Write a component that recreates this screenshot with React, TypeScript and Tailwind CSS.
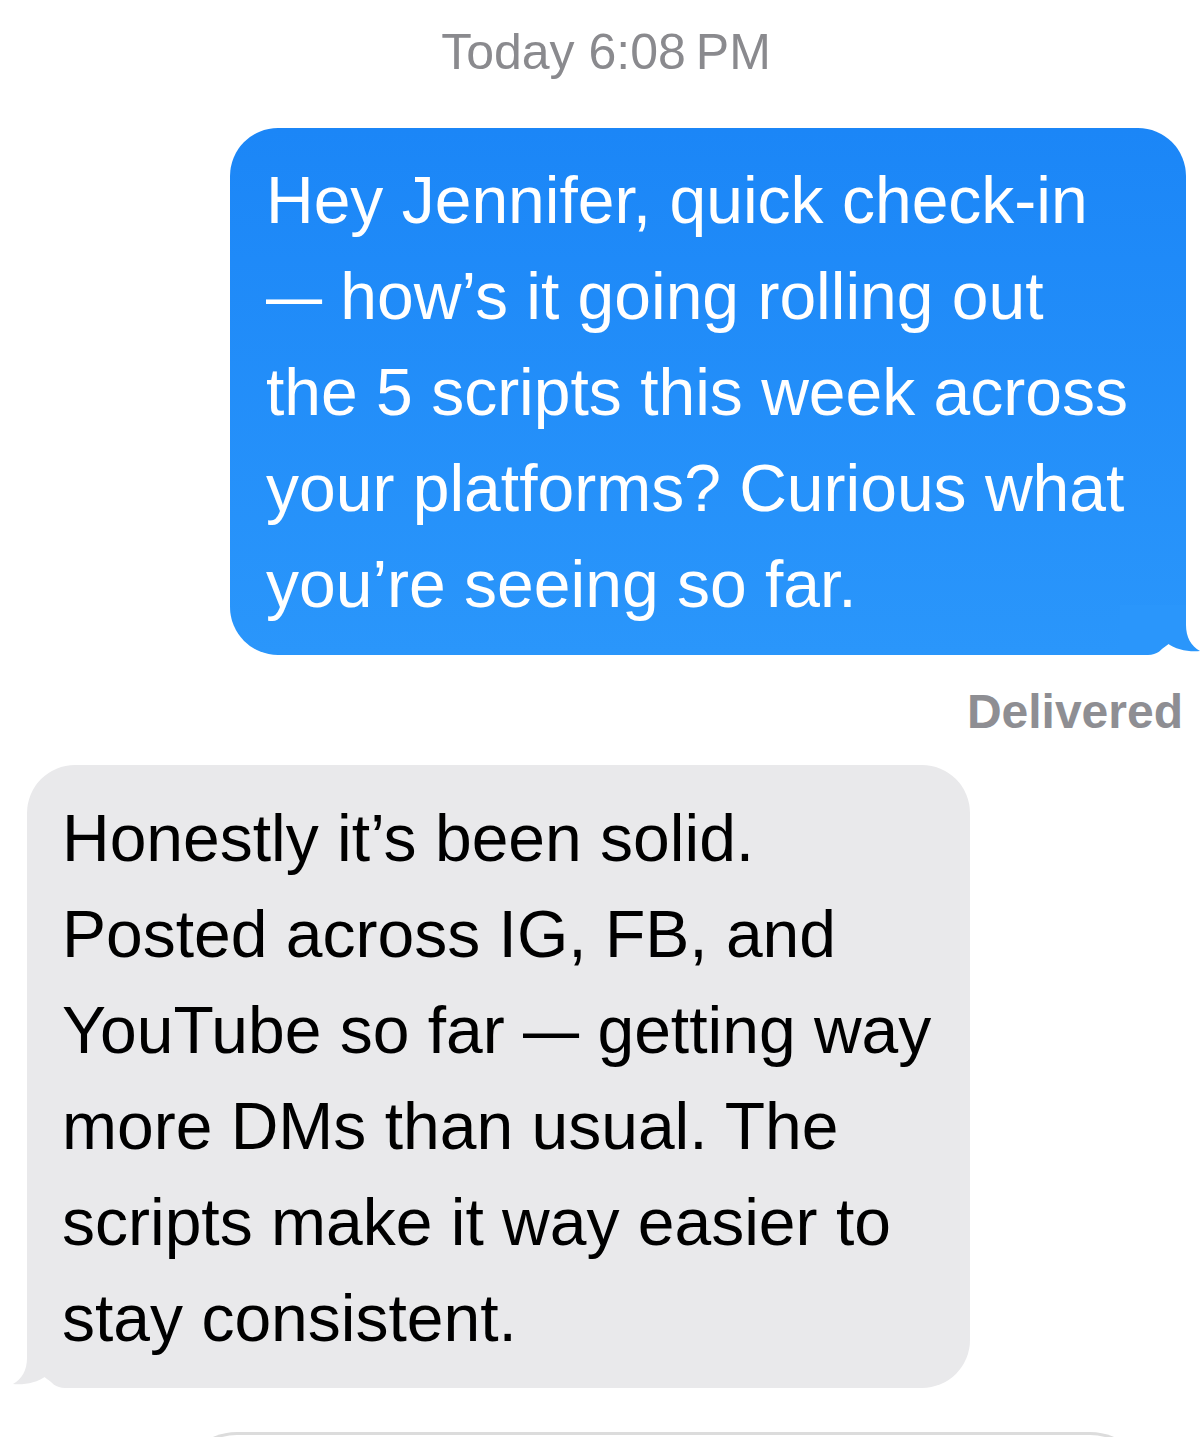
import React from "react";

const TAIL =
  "M0,0 H66 V20 C66,32 71,41 80,46 C69,47 56,45 47,38 C42,45 37,50 28,50 H0 Z";

function Dash() {
  return (
    <span className="inline-block w-[56px]">
      <span className="inline-block origin-left scale-x-[0.85]">{"\u2014"}</span>
    </span>
  );
}

export default function App() {
  return (
    <div className="w-[1200px] h-[1437px] overflow-hidden bg-white font-['Liberation_Sans',Arial,sans-serif]">
      <div className="pt-6 pl-[12px] text-center text-[50px] leading-[56px] text-[#8a8a8e]">
        Today 6:08{"\u2009"}PM
      </div>

      <div className="mt-[48px] flex justify-end pr-[14px]">
        <div className="relative w-[956px] rounded-[48px] bg-gradient-to-b from-[#1b86f7] to-[#2a96fb] pl-[36px] pt-[24px] pb-[23px] text-[66px] leading-[96px] text-white">
          <svg
            className="absolute bottom-0 right-[-14px]"
            width="80"
            height="50"
            viewBox="0 0 80 50"
          >
            <path d={TAIL} fill="#2a96fb" />
          </svg>
          <div className="relative">
            <div className="whitespace-nowrap">Hey Jennifer, quick check-in</div>
            <div className="whitespace-nowrap">
              <Dash /> how{"\u2019"}s it going rolling out
            </div>
            <div className="whitespace-nowrap">the 5 scripts this week across</div>
            <div className="whitespace-nowrap">your platforms? Curious what</div>
            <div className="whitespace-nowrap">you{"\u2019"}re seeing so far.</div>
          </div>
        </div>
      </div>

      <div className="mt-[30px] pr-[17px] text-right text-[48px] leading-[54px] font-bold text-[#8e8e93]">
        Delivered
      </div>

      <div className="mt-[26px] pl-[27px]">
        <div className="relative w-[943px] rounded-[48px] bg-[#e9e9eb] pl-[35px] pt-[25px] pb-[22px] text-[66px] leading-[96px] text-black">
          <svg
            className="absolute bottom-0 left-[-14px] -scale-x-100"
            width="80"
            height="50"
            viewBox="0 0 80 50"
          >
            <path d={TAIL} fill="#e9e9eb" />
          </svg>
          <div className="relative">
            <div className="whitespace-nowrap">Honestly it{"\u2019"}s been solid.</div>
            <div className="whitespace-nowrap">Posted across IG, FB, and</div>
            <div className="whitespace-nowrap">
              YouTube so far <Dash /> getting way
            </div>
            <div className="whitespace-nowrap">more DMs than usual. The</div>
            <div className="whitespace-nowrap">scripts make it way easier to</div>
            <div className="whitespace-nowrap">stay consistent.</div>
          </div>
        </div>
      </div>

      <div className="mt-[44px] ml-[177px] w-[973px] h-[80px] rounded-t-[60px] border-t-[3px] border-x-[3px] border-[#dcdcdc]" />
    </div>
  );
}
